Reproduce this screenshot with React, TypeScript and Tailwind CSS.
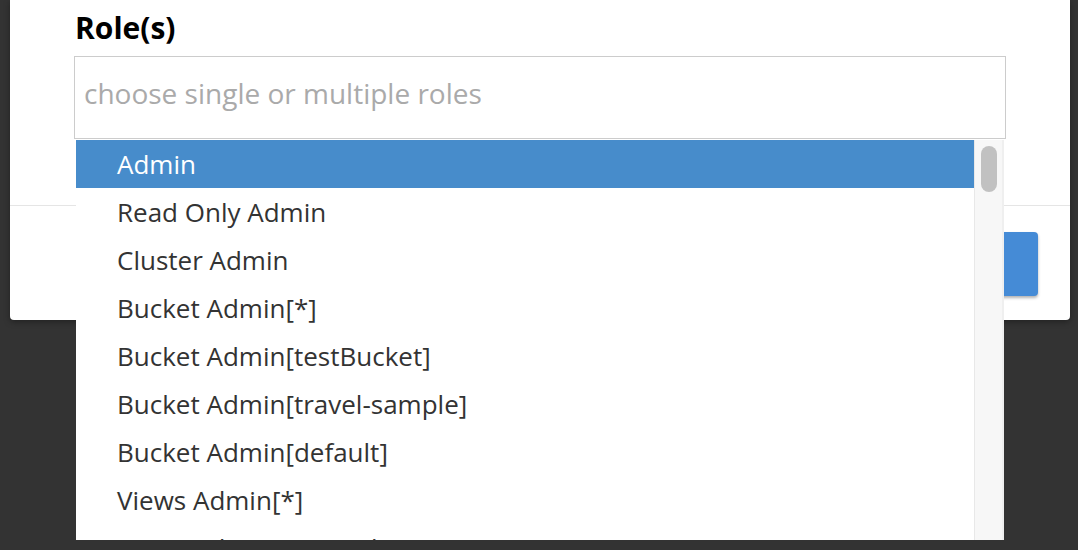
import React from 'react';

const roles = [
  'Admin',
  'Read Only Admin',
  'Cluster Admin',
  'Bucket Admin[*]',
  'Bucket Admin[testBucket]',
  'Bucket Admin[travel-sample]',
  'Bucket Admin[default]',
  'Views Admin[*]',
  'Views Admin[testBucket]',
];

export default function App() {
  return (
    <div
      className="relative w-[1078px] h-[550px] overflow-hidden bg-[#333333]"
      style={{ fontFamily: '"Open Sans", "Noto Sans", sans-serif' }}
    >
      <div className="ml-[10px] w-[1060px] h-[320px] bg-white rounded-b-[4px] shadow-[0_2px_6px_rgba(0,0,0,0.35)] flex flex-col">
        <div className="h-[206px] px-[64px] pt-[10px] border-b border-[#e5e5e5]">
          <label className="block pl-px text-[30px] leading-[36px] font-bold text-black">Role(s)</label>
          <div className="relative mt-[10px]">
            <div className="h-[83px] border border-[#cccccc] px-[9px] flex items-center pb-[9px]">
              <span className="text-[28px] text-[#aaaaaa]">choose single or multiple roles</span>
            </div>
            <div className="absolute z-10 top-[84px] left-[2px] right-[2px] h-[400px] bg-white flex">
              <ul className="flex-1 overflow-hidden">
                {roles.map((role, i) => (
                  <li
                    key={role}
                    className={`h-[48px] pl-[41px] flex items-center text-[26px] ${
                      i === 0 ? 'bg-[#478ccb] text-white' : 'text-[#333333]'
                    }`}
                  >
                    {role}
                  </li>
                ))}
              </ul>
              <div className="w-[30px] bg-[#f7f7f7] border-l border-[#e8e8e8] border-r-2 border-r-[#efefef] pt-[6px] flex justify-center">
                <div className="w-[16px] h-[46px] rounded-full bg-[#c1c1c1]"></div>
              </div>
            </div>
          </div>
        </div>
        <div className="flex-1 flex justify-end items-start pt-[26px] pr-[32px]">
          <button className="w-[140px] h-[64px] rounded-[4px] bg-[#458bd6] shadow-[0_2px_3px_rgba(0,0,0,0.3)]"></button>
        </div>
      </div>
    </div>
  );
}
